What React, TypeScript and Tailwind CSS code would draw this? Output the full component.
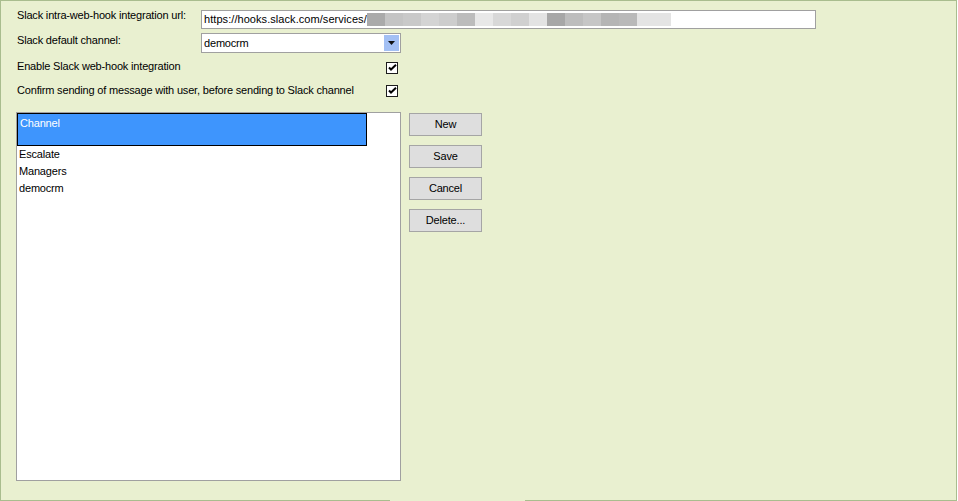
import React from 'react';

// blurred part of the webhook url
const BLUR = [
  '#aaaaaa', '#c4c4c4', '#c9c9c9', '#d4d4d4', '#cdcdcd', '#bcbcbc', '#e8e8e8', '#d8d8d8',
  '#d0d0d0', '#e3e3e3', '#a7a7a7', '#bdbdbd', '#c6c6c6', '#b5b5b5', '#b9b9b9',
];

const ITEMS = ['Escalate', 'Managers', 'democrm'];
const BUTTONS = ['New', 'Save', 'Cancel', 'Delete...'];

function Check() {
  return (
    <div className="w-[12px] h-[12px] border border-[#1c1c1c] bg-white flex items-center justify-center">
      <svg width="9" height="8" viewBox="0 0 9 8">
        <path d="M1 3.5 L3 5.5 L8 0.8" stroke="#000" strokeWidth="2" fill="none" />
      </svg>
    </div>
  );
}

export default function App() {
  return (
    <div
      className="relative w-[957px] h-[501px] bg-[#e9f0d0] border border-[#a9bd8e] text-[11px] tracking-[-0.18px] text-black"
      style={{ fontFamily: '"Liberation Sans", Arial, sans-serif' }}
    >
      {/* tab gap in the bottom border */}
      <div className="absolute left-[389px] -bottom-px w-[135px] h-[2px] bg-[#e9f0d0]" />

      <div className="pl-[16px] pt-[8px] flex flex-col">
        {/* url */}
        <div className="flex items-start h-[20px]">
          <div className="w-[184px] leading-[13px]">Slack intra-web-hook integration url:</div>
          <div className="mt-px w-[615px] h-[19px] border border-[#a0a0a0] bg-white flex items-center pl-[2px] leading-[13px]">
            <span className="tracking-[0.06px]">https://hooks.slack.com/services/</span>
            <div className="flex h-[13px]">
              {BLUR.map((c, i) => (
                <div key={i} className="w-[18px] h-full" style={{ background: c }} />
              ))}
              <div className="w-[34px] h-full bg-[#e4e4e4]" />
            </div>
          </div>
        </div>

        {/* default channel */}
        <div className="flex items-start h-[20px] mt-[4px]">
          <div className="w-[184px] leading-[13px] pt-px">Slack default channel:</div>
          <div className="w-[200px] h-[20px] border border-[#a0a0a0] bg-white flex items-center justify-between pl-[2px] pr-px">
            <span className="leading-[13px]">democrm</span>
            <div className="w-[15px] h-[16px] bg-[#a3c0f4] flex items-center justify-center">
              <svg width="7" height="4" viewBox="0 0 7 4">
                <path d="M0 0 H7 L3.5 4 Z" fill="#111" />
              </svg>
            </div>
          </div>
        </div>

        {/* enable */}
        <div className="flex items-start h-[15px] mt-[7px]">
          <div className="w-[369px] leading-[13px]">Enable Slack web-hook integration</div>
          <div className="mt-[2px]">
            <Check />
          </div>
        </div>

        {/* confirm */}
        <div className="flex items-start h-[14px] mt-[9px]">
          <div className="w-[369px] leading-[13px]">
            Confirm sending of message with user, before sending to Slack channel
          </div>
          <div className="mt-px">
            <Check />
          </div>
        </div>

        {/* channels */}
        <div className="flex items-start mt-[14px] -ml-px">
          <div className="w-[385px] h-[369px] border border-[#a0a0a0] bg-white">
            <div className="w-[350px] h-[33px] bg-[#3e95fd] border border-black text-white pl-[2px] pt-[3px] leading-[13px]">
              Channel
            </div>
            {ITEMS.map((it) => (
              <div key={it} className="h-[17px] leading-[16px] pl-[2px]">
                {it}
              </div>
            ))}
          </div>

          <div className="ml-[8px] mt-px flex flex-col gap-[9px]">
            {BUTTONS.map((b) => (
              <button
                key={b}
                className="w-[73px] h-[23px] border border-[#a5a5a5] bg-[#dedede] text-[11px] leading-[13px] tracking-[-0.18px] text-black"
              >
                {b}
              </button>
            ))}
          </div>
        </div>
      </div>
    </div>
  );
}
